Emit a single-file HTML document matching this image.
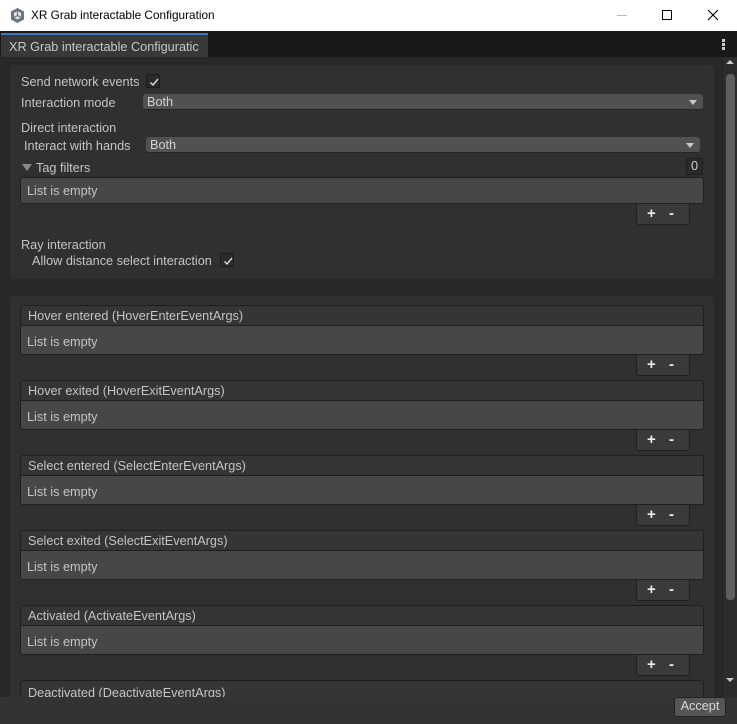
<!DOCTYPE html>
<html><head><meta charset="utf-8"><style>
*{margin:0;padding:0;box-sizing:border-box}
body{width:737px;height:724px;overflow:hidden;background:#282828;font-family:"Liberation Sans",sans-serif;font-size:12.7px;color:#c4c4c4;position:relative}
.a{position:absolute}
.t{position:absolute;white-space:nowrap;line-height:14px}
.dd{position:absolute;background:#515151;border-radius:3px;height:16px;border-bottom:1px solid #242424}
.dd span{position:absolute;left:4px;top:1px;color:#d2d2d2}
.dd i{position:absolute;right:6px;top:6px;width:0;height:0;border-left:4px solid transparent;border-right:4px solid transparent;border-top:5px solid #c8c8c8}
.cb{position:absolute;width:14px;height:14px;background:#2a2a2a;border:1px solid #1a1a1a;border-radius:2px}
.cb svg{position:absolute;left:1px;top:1px}
.hdr{position:absolute;left:20px;width:684px;height:21px;background:#353535;border:1px solid #1f1f1f;border-radius:3px 3px 0 0}
.body{position:absolute;left:20px;width:684px;height:29px;background:#474747;border:1px solid #1f1f1f;border-top:none;border-radius:0 0 3px 3px}
.pm{position:absolute;left:636px;width:54px;height:21px;background:#3a3a3a;border:1px solid #1f1f1f;border-top:none;border-radius:0 0 3px 3px;color:#eee;font-weight:bold;font-size:15px}
.pm b{position:absolute;top:1px}
</style></head><body>
<div class="a" style="left:0;top:0;width:737px;height:31px;background:#fff"></div>
<svg class="a" style="left:9px;top:7px" width="17" height="17" viewBox="0 0 17 17"><path d="M8.5 1 L15 4.5 V12.5 L8.5 16 L2 12.5 V4.5Z" fill="#6b7380"/><path d="M8.5 4 L12 6 V10.5 L8.5 12.5 L5 10.5 V6Z" fill="#e8e8e8"/><path d="M8.5 4 V8.5 L12 10.5 M8.5 8.5 L5 10.5" stroke="#6b7380" stroke-width="1.2" fill="none"/></svg>
<div class="t" style="left:31px;top:8px;color:#000;font-size:11.8px">XR Grab interactable Configuration</div>
<div class="a" style="left:617px;top:15px;width:10px;height:1px;background:#bbb"></div>
<div class="a" style="left:662px;top:10px;width:10px;height:10px;border:1px solid #000"></div>
<svg class="a" style="left:707px;top:9px" width="12" height="12"><path d="M1 1L11 11M11 1L1 11" stroke="#000" stroke-width="1.1"/></svg>
<div class="a" style="left:0;top:31px;width:737px;height:26px;background:#191919"></div>
<div class="a" style="left:1px;top:33px;width:207px;height:24px;background:#383838;border-top:2px solid #3a79bb"></div>
<div class="t" style="left:9px;top:40px;color:#c8c8c8;width:194px;overflow:hidden">XR Grab interactable Configuratic</div>
<div class="a" style="left:722px;top:39px;width:3px;height:3px;background:#ccc;box-shadow:0 4px 0 #ccc,0 8px 0 #ccc"></div>
<div class="a" style="left:0;top:57px;width:737px;height:640px;background:#282828"></div>
<div class="a" style="left:722px;top:57px;width:15px;height:640px;background:#2c2c2c;border-left:1px solid #232323"></div>
<div class="a" style="left:726px;top:60px;width:0;height:0;border-left:4px solid transparent;border-right:4px solid transparent;border-bottom:4px solid #c8c8c8"></div>
<div class="a" style="left:726px;top:74px;width:9px;height:526px;background:#5f5f5f;border-radius:4px"></div>
<div class="a" style="left:726px;top:678px;width:0;height:0;border-left:4px solid transparent;border-right:4px solid transparent;border-top:4px solid #c8c8c8"></div>
<div class="a" style="left:10px;top:65px;width:704px;height:214px;background:#303030;border-radius:5px"></div>
<div class="t" style="left:21px;top:75px">Send network events</div>
<div class="cb" style="left:146px;top:74px"><svg width="12" height="12"><path d="M2.5 6.5L5 9L10 3" stroke="#ddd" stroke-width="1.4" fill="none"/></svg></div>
<div class="t" style="left:21px;top:96px">Interaction mode</div>
<div class="dd" style="left:143px;top:94px;width:560px"><span>Both</span><i></i></div>
<div class="t" style="left:21px;top:121px">Direct interaction</div>
<div class="t" style="left:24px;top:139px">Interact with hands</div>
<div class="dd" style="left:146px;top:137px;width:554px"><span>Both</span><i></i></div>
<div class="a" style="left:22px;top:164px;width:0;height:0;border-left:5px solid transparent;border-right:5px solid transparent;border-top:7px solid #8a8a8a"></div>
<div class="t" style="left:36px;top:161px">Tag filters</div>
<div class="a" style="left:686px;top:158px;width:17px;height:17px;background:#2a2a2a;border:1px solid #1e1e1e;border-radius:2px;text-align:center;line-height:15px;color:#ccc">0</div>
<div class="a" style="left:20px;top:177px;width:684px;height:27px;background:#474747;border:1px solid #1f1f1f;border-radius:3px"></div>
<div class="t" style="left:27px;top:184px">List is empty</div>
<div class="pm" style="top:204px"><b style="left:10px">+</b><b style="left:32px">-</b></div>
<div class="t" style="left:21px;top:238px">Ray interaction</div>
<div class="t" style="left:32px;top:254px">Allow distance select interaction</div>
<div class="cb" style="left:220px;top:253px"><svg width="12" height="12"><path d="M2.5 6.5L5 9L10 3" stroke="#ddd" stroke-width="1.4" fill="none"/></svg></div>
<div class="a" style="left:10px;top:296px;width:704px;height:401px;background:#303030;border-radius:5px 5px 0 0"></div>

<div class="hdr" style="top:305px"></div><div class="t" style="left:28px;top:309px">Hover entered (HoverEnterEventArgs)</div>
<div class="body" style="top:326px"></div><div class="t" style="left:27px;top:335px">List is empty</div>
<div class="pm" style="top:355px"><b style="left:10px">+</b><b style="left:32px">-</b></div>

<div class="hdr" style="top:380px"></div><div class="t" style="left:28px;top:384px">Hover exited (HoverExitEventArgs)</div>
<div class="body" style="top:401px"></div><div class="t" style="left:27px;top:410px">List is empty</div>
<div class="pm" style="top:430px"><b style="left:10px">+</b><b style="left:32px">-</b></div>

<div class="hdr" style="top:455px"></div><div class="t" style="left:28px;top:459px">Select entered (SelectEnterEventArgs)</div>
<div class="body" style="top:476px"></div><div class="t" style="left:27px;top:485px">List is empty</div>
<div class="pm" style="top:505px"><b style="left:10px">+</b><b style="left:32px">-</b></div>

<div class="hdr" style="top:530px"></div><div class="t" style="left:28px;top:534px">Select exited (SelectExitEventArgs)</div>
<div class="body" style="top:551px"></div><div class="t" style="left:27px;top:560px">List is empty</div>
<div class="pm" style="top:580px"><b style="left:10px">+</b><b style="left:32px">-</b></div>

<div class="hdr" style="top:605px"></div><div class="t" style="left:28px;top:609px">Activated (ActivateEventArgs)</div>
<div class="body" style="top:626px"></div><div class="t" style="left:27px;top:635px">List is empty</div>
<div class="pm" style="top:655px"><b style="left:10px">+</b><b style="left:32px">-</b></div>

<div class="hdr" style="top:680px"></div><div class="t" style="left:28px;top:686px">Deactivated (DeactivateEventArgs)</div>

<div class="a" style="left:0;top:697px;width:737px;height:27px;background:#333333"></div>
<div class="a" style="left:674px;top:697px;width:52px;height:20px;background:#555;border:1px solid #222;border-radius:3px;color:#d8d8d8;text-align:center;line-height:17px">Accept</div>
</body></html>
